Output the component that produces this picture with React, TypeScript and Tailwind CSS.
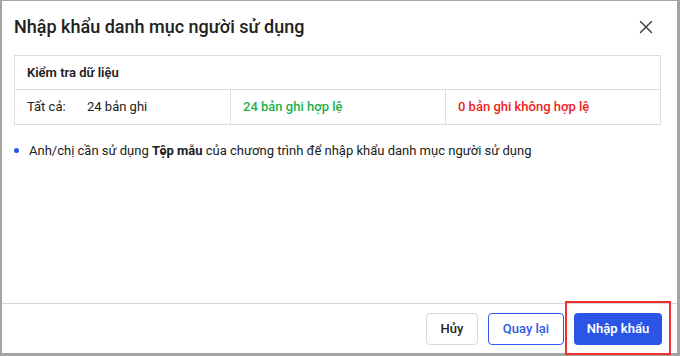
import { X } from "lucide-react";

export default function App() {
  return (
    <div className="h-[356px] w-[680px] bg-[#a4a4a4] pl-[2px] pt-[1px] pr-[3px] pb-[3px] font-['Roboto',sans-serif]">
      <div className="relative flex h-full flex-col bg-white">
        {/* Header */}
        <div className="flex h-[50px] items-center justify-between pl-[12px] pr-[20px] pt-[1px]">
          <h1 className="text-[18px] font-medium text-[#212121]">Nhập khẩu danh mục người sử dụng</h1>
          <X className="h-[22px] w-[22px] text-[#444]" strokeWidth={1.6} />
        </div>

        {/* Data check table */}
        <div className="ml-[12px] mr-[16px] mt-[4px] border border-[#dedede] text-[13px] text-[#212121]">
          <div className="flex h-[34px] items-center border-b border-[#dedede] px-[12px] font-semibold">
            Kiểm tra dữ liệu
          </div>
          <div className="grid h-[34px] grid-cols-3">
            <div className="flex items-center px-[12px]">
              <span className="w-[60px]">Tất cả:</span>
              <span>24 bản ghi</span>
            </div>
            <div className="flex items-center border-l border-[#dedede] px-[12px] font-medium text-[#1db14b]">
              24 bản ghi hợp lệ
            </div>
            <div className="flex items-center border-l border-[#dedede] px-[12px] font-medium text-[#f01c1c]">
              0 bản ghi không hợp lệ
            </div>
          </div>
        </div>

        {/* Note */}
        <div className="mt-[16px] flex items-center gap-[10px] pl-[12px] text-[13px] text-[#212121]">
          <span className="h-[5px] w-[5px] rounded-full bg-[#2b55e6]" />
          <p>
            Anh/chị cần sử dụng <span className="font-bold">Tệp mẫu</span> của chương trình để nhập khẩu danh mục người sử dụng
          </p>
        </div>

        <div className="flex-1" />

        {/* Footer */}
        <div className="flex h-[50px] items-center justify-end gap-[10px] border-t border-[#d6d3dc] pr-[15px]">
          <button className="h-[32px] w-[52px] rounded-[4px] border border-[#d9d9d9] text-[13px] font-medium text-[#212121]">
            Hủy
          </button>
          <button className="h-[32px] w-[76px] rounded-[4px] border border-[#2f5be8] text-[13px] font-medium text-[#2f5be8]">
            Quay lại
          </button>
          <button className="h-[32px] w-[88px] rounded-[4px] bg-[#2b55e6] text-[13px] font-semibold text-white">
            Nhập khẩu
          </button>
        </div>

        {/* Annotation highlight */}
        <div className="absolute left-[563px] top-[300px] h-[54px] w-[106px] border-2 border-[#ee3030]" />
      </div>
    </div>
  );
}
